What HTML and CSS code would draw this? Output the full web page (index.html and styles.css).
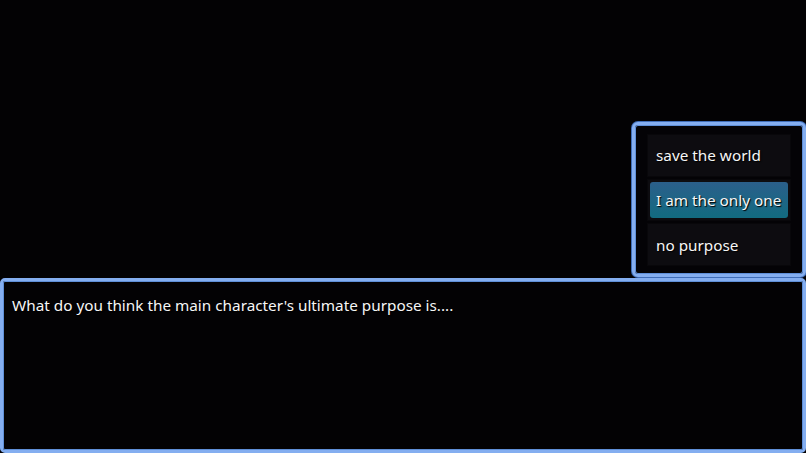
FILE: index.html
```html
<!DOCTYPE html>
<html lang="en">
<head>
<meta charset="utf-8">
<title>Dialogue</title>
<link rel="stylesheet" href="styles.css">
</head>
<body>
<div class="scene">
  <div class="stage">
    <div class="choices">
      <div class="choice"><span class="label">save the world</span></div>
      <div class="choice selected"><span class="label">I am the only one</span></div>
      <div class="choice"><span class="label">no purpose</span></div>
    </div>
  </div>
  <div class="message">
    <p class="message-text">What do you think the main character's ultimate purpose is....</p>
  </div>
</div>
</body>
</html>
```

FILE: styles.css
```css
html, body {
  margin: 0;
  padding: 0;
  background: #030204;
}

.scene {
  width: 806px;
  height: 453px;
  display: flex;
  flex-direction: column;
  font-family: "Noto Sans", "Open Sans", sans-serif;
  color: #f6f6f6;
}

.stage {
  flex: 1;
  display: flex;
  justify-content: flex-end;
  align-items: flex-end;
  padding-bottom: 1px;
}

.choices {
  width: 174px;
  height: 155px;
  box-sizing: border-box;
  border: 3px solid #84aef0;
  border-radius: 6px;
  box-shadow: inset 0 0 0 1px #5f8fd8, 0 0 0 1px #3f6db8;
  background: #040306;
  padding: 9px 12px 8px 12px;
  display: flex;
  flex-direction: column;
  gap: 2px;
}

.choice {
  flex: 1;
  display: flex;
  align-items: center;
  background: #0d0c10;
  border: 1px solid #08070a;
  padding: 2px;
}

.label {
  flex: 1;
  align-self: stretch;
  display: flex;
  align-items: center;
  padding-left: 6px;
  font-size: 15.3px;
  text-shadow: 1px 1px 1px #000;
  border-radius: 3px;
}

.selected .label {
  background: linear-gradient(#2b5f8b, #126b80);
}

.message {
  height: 175px;
  box-sizing: border-box;
  border: 3px solid #84aef0;
  border-radius: 5px;
  box-shadow: inset 0 0 0 1px #5f8fd8;
  background: #030204;
  padding: 13px 9px;
}

.message-text {
  margin: 0;
  font-size: 15.3px;
  line-height: 22px;
  text-shadow: 1px 1px 1px #000;
}
```
